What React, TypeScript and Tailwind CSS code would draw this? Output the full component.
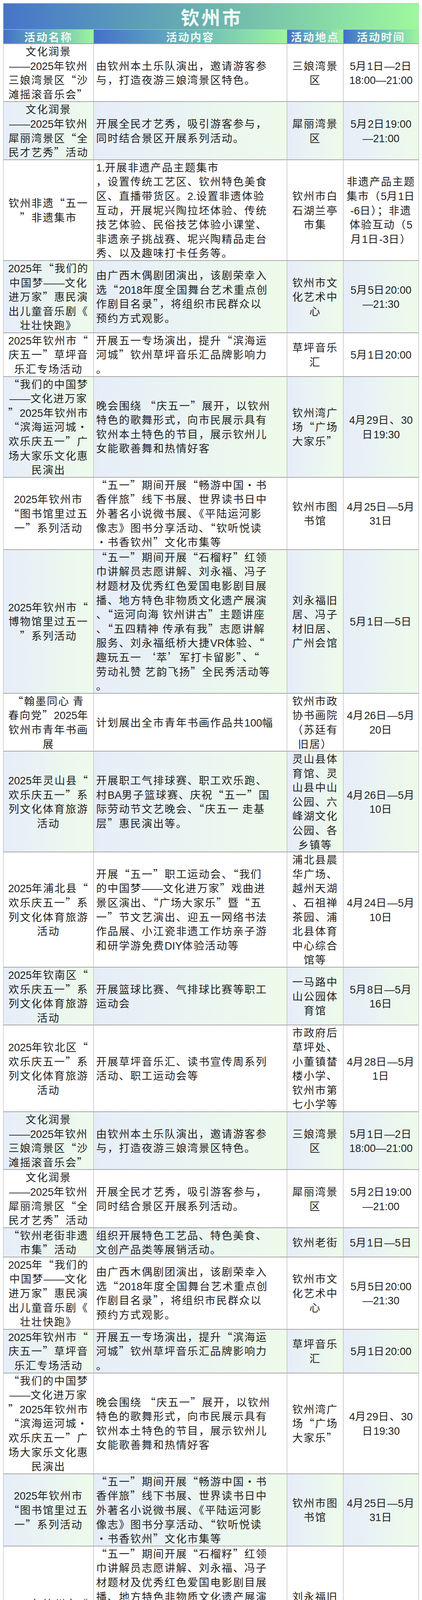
import type { ReactNode } from 'react'

type Row = [string[], string[], string[], string[]]

const firstHalf: Row[] = [
  [
    ['文化润景', '——2025年钦州', '三娘湾景区“沙', '滩摇滚音乐会”'],
    ['由钦州本土乐队演出，邀请游客参', '与，打造夜游三娘湾景区特色。'],
    ['三娘湾景', '区'],
    ['5月1日—2日', '18:00—21:00'],
  ],
  [
    ['文化润景', '——2025年钦州', '犀丽湾景区“全', '民才艺秀”活动'],
    ['开展全民才艺秀，吸引游客参与，', '同时结合景区开展系列活动。'],
    ['犀丽湾景', '区'],
    ['5月2日19:00', '—21:00'],
  ],
]

const nonHeritage: Row = [
  ['钦州非遗“五一', '”非遗集市'],
  [
    '1.开展非遗产品主题集市',
    '，设置传统工艺区、钦州特色美食',
    '区、直播带货区。2.设置非遗体验',
    '互动，开展坭兴陶拉坯体验、传统',
    '技艺体验、民俗技艺体验小课堂、',
    '非遗亲子挑战赛、坭兴陶精品走台',
    '秀、以及趣味打卡任务等。',
  ],
  ['钦州市白', '石湖兰亭', '市集'],
  ['非遗产品主题', '集市（5月1日', '-6日）；非遗', '体验互动（5', '月1日-3日）'],
]

const oldStreet: Row = [
  ['“钦州老街非遗', '市集”活动'],
  ['组织开展特色工艺品、特色美食、', '文创产品类等展销活动。'],
  ['钦州老街'],
  ['5月1日—5日'],
]

const secondHalf: Row[] = [
  [
    ['2025年“我们的', '中国梦——文化', '进万家”惠民演', '出儿童音乐剧《', '壮壮快跑》'],
    ['由广西木偶剧团演出，该剧荣幸入', '选“2018年度全国舞台艺术重点创', '作剧目名录”，将组织市民群众以', '预约方式观影。'],
    ['钦州市文', '化艺术中', '心'],
    ['5月5日20:00', '—21:30'],
  ],
  [
    ['2025年钦州市“', '庆五一”草坪音', '乐汇专场活动'],
    ['开展五一专场演出，提升“滨海运', '河城”钦州草坪音乐汇品牌影响力', '。'],
    ['草坪音乐', '汇'],
    ['5月1日20:00'],
  ],
  [
    ['“我们的中国梦', '——文化进万家', '”2025年钦州市', '“滨海运河城·', '欢乐庆五一”广', '场大家乐文化惠', '民演出'],
    ['晚会围绕 “庆五一”展开，以钦州', '特色的歌舞形式，向市民展示具有', '钦州本土特色的节目，展示钦州儿', '女能歌善舞和热情好客'],
    ['钦州湾广', '场“广场', '大家乐”'],
    ['4月29日、30', '日19:30'],
  ],
  [
    ['2025年钦州市', '“图书馆里过五', '一”系列活动'],
    ['“五一”期间开展“畅游中国·书', '香伴旅”线下书展、世界读书日中', '外著名小说微书展、《平陆运河影', '像志》图书分享活动、“钦听悦读', '·书香钦州”文化市集等'],
    ['钦州市图', '书馆'],
    ['4月25日—5月', '31日'],
  ],
  [
    ['2025年钦州市“', '博物馆里过五一', '”系列活动'],
    [
      '“五一”期间开展“石榴籽”红领',
      '巾讲解员志愿讲解、刘永福、冯子',
      '材题材及优秀红色爱国电影剧目展',
      '播、地方特色非物质文化遗产展演',
      '、“运河向海 钦州讲古”主题讲座',
      '、“五四精神 传承有我”志愿讲解',
      '服务、刘永福纸桥大捷VR体验、“',
      '趣玩五一 ‘萃’军打卡留影”、“',
      '劳动礼赞 艺韵飞扬”全民秀活动等',
      '。',
    ],
    ['刘永福旧', '居、冯子', '材旧居、', '广州会馆'],
    ['5月1日—5日'],
  ],
  [
    ['“翰墨同心 青', '春向党”2025年', '钦州市青年书画', '展'],
    ['计划展出全市青年书画作品共100幅'],
    ['钦州市政', '协书画院', '（苏廷有', '旧居）'],
    ['4月26日—5月', '20日'],
  ],
  [
    ['2025年灵山县“', '欢乐庆五一”系', '列文化体育旅游', '活动'],
    ['开展职工气排球赛、职工欢乐跑、', '村BA男子篮球赛、庆祝“五一”国', '际劳动节文艺晚会、“庆五一 走基', '层”惠民演出等。'],
    ['灵山县体', '育馆、灵', '山县中山', '公园、六', '峰湖文化', '公园、各', '乡镇等'],
    ['4月26日—5月', '10日'],
  ],
  [
    ['2025年浦北县“', '欢乐庆五一”系', '列文化体育旅游', '活动'],
    ['开展“五一”职工运动会、“我们', '的中国梦——文化进万家”戏曲进', '景区演出、“广场大家乐”暨“五', '一”节文艺演出、迎五一网络书法', '作品展、小江瓷非遗工作坊亲子游', '和研学游免费DIY体验活动等'],
    ['浦北县晨', '华广场、', '越州天湖', '、石祖禅', '茶园、浦', '北县体育', '中心综合', '馆等'],
    ['4月24日—5月', '10日'],
  ],
  [
    ['2025年钦南区“', '欢乐庆五一”系', '列文化体育旅游', '活动'],
    ['开展篮球比赛、气排球比赛等职工', '运动会'],
    ['一马路中', '山公园体', '育馆'],
    ['5月8日—5月', '16日'],
  ],
  [
    ['2025年钦北区“', '欢乐庆五一”系', '列文化体育旅游', '活动'],
    ['开展草坪音乐汇、读书宣传周系列', '活动、职工运动会等'],
    ['市政府后', '草坪处、', '小董镇榃', '楼小学、', '钦州市第', '七小学等'],
    ['4月28日—5月', '1日'],
  ],
]

const rows: Row[] = [
  ...firstHalf,
  nonHeritage,
  ...secondHalf,
  ...firstHalf,
  oldStreet,
  ...secondHalf,
]

// digits and latin letters use a narrow face, as in the source table
function Line({ text }: { text: string }) {
  const parts = text.split(/([0-9A-Za-z:.\-—]+)/)
  const out: ReactNode[] = parts.map((p, i) =>
    i % 2 === 1 ? (
      <span
        key={i}
        className="font-['Liberation_Sans_Narrow','Liberation_Sans',sans-serif] text-[27px] tracking-normal"
      >
        {p}
      </span>
    ) : (
      p
    ),
  )
  return <div className="h-[36.6px] max-w-full whitespace-pre">{out}</div>
}

const headers = ['活动名称', '活动内容', '活动地点', '活动时间']

export default function App() {
  return (
    <div className="bg-white pt-2 pl-2 font-['Noto_Sans_CJK_SC',sans-serif] text-[#1f1f1f]">
      <div className="w-[1064px] border-l border-t border-[#a6b9ad]">
        <div className="flex h-[67px] items-center justify-center border-r border-b border-[#a8d8b0] bg-linear-to-r from-[#4774c9] via-[#6cb3ae] to-[#9ef99c]">
          <h1 className="pl-1 text-[48px] leading-none font-bold tracking-[5px] text-[#f4fbf6]">钦州市</h1>
        </div>
        <div className="grid h-[37px] grid-cols-[231px_495px_144px_193px] border-b-2 border-[#a3a3a3]">
          {headers.map((h) => (
            <div
              key={h}
              className="flex items-center justify-center border-r border-[#9cc9a9] bg-linear-to-r from-[#4470c8] to-[#9cf69b] text-[28px] leading-none font-bold tracking-[3px] text-[#eef8f1]"
            >
              {h}
            </div>
          ))}
        </div>
        {rows.map((row, r) => {
          const shaded = r % 2 === 1
          const bg = shaded ? 'bg-linear-to-r from-[#e6edf9] to-[#eefbea]' : 'bg-white'
          return (
            <div
              key={r}
              className="grid grid-cols-[231px_495px_144px_193px] border-b-2 border-[#a8a8a8] text-[27px] leading-[36.6px] tracking-[2.2px]"
            >
              {row.map((cell, c) => (
                <div
                  key={c}
                  className={`flex flex-col justify-center border-r border-[#a8a8a8] ${bg} ${
                    c === 1 ? 'items-start pl-[6px] text-left' : 'items-center text-center'
                  }`}
                >
                  {cell.map((l, k) => (
                    <Line key={k} text={l} />
                  ))}
                </div>
              ))}
            </div>
          )
        })}
      </div>
    </div>
  )
}
